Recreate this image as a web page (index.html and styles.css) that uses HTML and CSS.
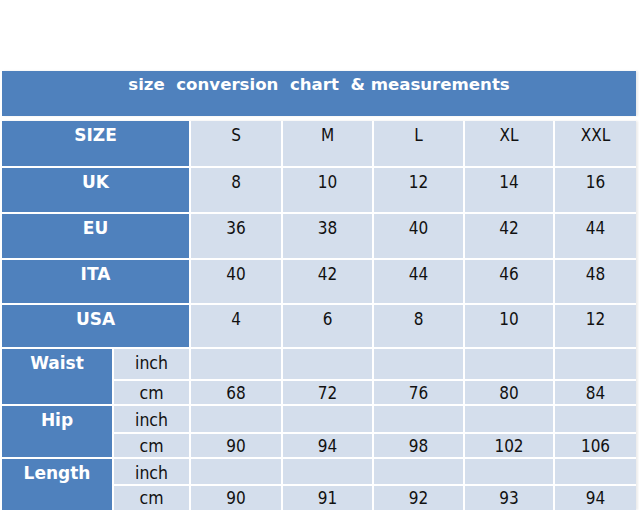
FILE: index.html
```html
<!DOCTYPE html>
<html>
<head>
<meta charset="utf-8">
<link rel="stylesheet" href="styles.css">
</head>
<body>
<div class="chart">
  <div class="title">size  conversion  chart  &amp; measurements</div>
  <div class="grid">
    <div class="lbl wide">SIZE</div>
    <div class="cell">S</div><div class="cell">M</div><div class="cell">L</div><div class="cell">XL</div><div class="cell">XXL</div>

    <div class="lbl wide">UK</div>
    <div class="cell">8</div><div class="cell">10</div><div class="cell">12</div><div class="cell">14</div><div class="cell">16</div>

    <div class="lbl wide">EU</div>
    <div class="cell">36</div><div class="cell">38</div><div class="cell">40</div><div class="cell">42</div><div class="cell">44</div>

    <div class="lbl wide">ITA</div>
    <div class="cell">40</div><div class="cell">42</div><div class="cell">44</div><div class="cell">46</div><div class="cell">48</div>

    <div class="lbl wide">USA</div>
    <div class="cell">4</div><div class="cell">6</div><div class="cell">8</div><div class="cell">10</div><div class="cell">12</div>

    <div class="lbl tall">Waist</div>
    <div class="cell unit">inch</div>
    <div class="cell"></div><div class="cell"></div><div class="cell"></div><div class="cell"></div><div class="cell"></div>
    <div class="cell unit small">cm</div>
    <div class="cell small">68</div><div class="cell small">72</div><div class="cell small">76</div><div class="cell small">80</div><div class="cell small">84</div>

    <div class="lbl tall">Hip</div>
    <div class="cell unit">inch</div>
    <div class="cell"></div><div class="cell"></div><div class="cell"></div><div class="cell"></div><div class="cell"></div>
    <div class="cell unit small">cm</div>
    <div class="cell small">90</div><div class="cell small">94</div><div class="cell small">98</div><div class="cell small">102</div><div class="cell small">106</div>

    <div class="lbl tall">Length</div>
    <div class="cell unit">inch</div>
    <div class="cell"></div><div class="cell"></div><div class="cell"></div><div class="cell"></div><div class="cell"></div>
    <div class="cell unit small">cm</div>
    <div class="cell small">90</div><div class="cell small">91</div><div class="cell small">92</div><div class="cell small">93</div><div class="cell small">94</div>
  </div>
</div>
</body>
</html>
```
FILE: styles.css
```css
html, body {
  margin: 0;
  padding: 0;
  background: #ffffff;
}
body {
  width: 639px;
  height: 510px;
  overflow: hidden;
  font-family: "DejaVu Sans", Tahoma, sans-serif;
  font-stretch: condensed;
}
.chart {
  padding: 71px 0 0 2px;
}
.title {
  width: 634px;
  height: 45px;
  box-sizing: border-box;
  background: #4f81bd;
  color: #ffffff;
  font-weight: bold;
  font-stretch: normal;
  font-size: 16.6px;
  line-height: 20px;
  padding-top: 4px;
  text-align: center;
  white-space: pre;
  box-shadow: 2px 0 2px rgba(0,0,0,0.08);
}
.grid {
  margin-top: 5px;
  display: grid;
  grid-template-columns: 110px 75px 90px 89px 89px 88px 81px;
  grid-template-rows: 45px 44px 44px 43px 42px 30px 23px 26px 23px 25px 24px;
  gap: 2px;
  width: 634px;
  background: #ffffff;
  box-shadow: 2px 0 2px rgba(0,0,0,0.08);
}
.lbl {
  background: #4f81bd;
  color: #ffffff;
  font-weight: bold;
  font-stretch: normal;
  font-size: 17px;
  line-height: 20px;
  padding-top: 4px;
  text-align: center;
}
.lbl.wide {
  grid-column: span 2;
}
.lbl.tall {
  grid-row: span 2;
}
.cell {
  background: #d4deec;
  color: #111111;
  font-size: 17px;
  line-height: 20px;
  padding-top: 4px;
  text-align: center;
}
.cell.unit {
  font-size: 17.5px;
}
.cell.small {
  padding-top: 2px;
}
```
